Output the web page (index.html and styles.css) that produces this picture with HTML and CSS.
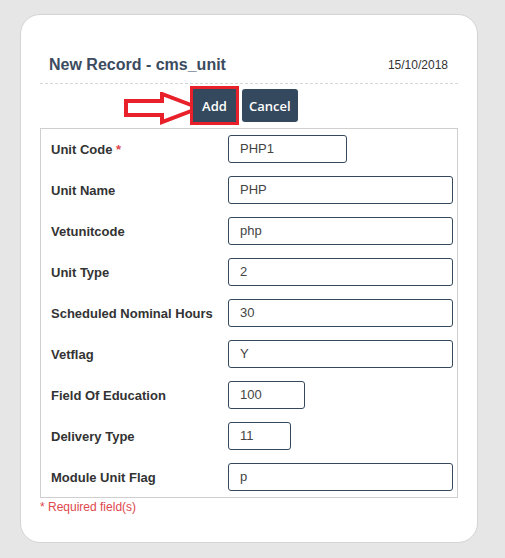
FILE: index.html
```html
<!DOCTYPE html>
<html>
<head>
<meta charset="utf-8">
<link rel="stylesheet" href="styles.css">
</head>
<body>
<div class="card">
  <div class="header">
    <span class="title">New Record - cms_unit</span>
    <span class="date">15/10/2018</span>
  </div>
  <div class="actions">
    <svg class="arrow" width="80" height="34" viewBox="0 0 80 34">
      <polygon points="3,9 39,9 39,2 76,16 39,30 39,23 3,23" fill="#fff" stroke="#e8202a" stroke-width="4" stroke-linejoin="miter"/>
    </svg>
    <button class="btn btn-add">Add</button>
    <button class="btn">Cancel</button>
  </div>
  <div class="form">
    <div class="row"><label>Unit Code <span class="req">*</span></label><div class="input w-code">PHP1</div></div>
    <div class="row"><label>Unit Name</label><div class="input w-full">PHP</div></div>
    <div class="row"><label>Vetunitcode</label><div class="input w-full">php</div></div>
    <div class="row"><label>Unit Type</label><div class="input w-full">2</div></div>
    <div class="row"><label>Scheduled Nominal Hours</label><div class="input w-full">30</div></div>
    <div class="row"><label>Vetflag</label><div class="input w-full">Y</div></div>
    <div class="row"><label>Field Of Education</label><div class="input w-foe">100</div></div>
    <div class="row"><label>Delivery Type</label><div class="input w-dt">11</div></div>
    <div class="row"><label>Module Unit Flag</label><div class="input w-full">p</div></div>
  </div>
  <div class="required">* Required field(s)</div>
</div>
</body>
</html>
```
FILE: styles.css
```css
html, body {
  margin: 0;
  padding: 0;
  background: #e6e6e6;
  font-family: "Liberation Sans", Arial, sans-serif;
}
body {
  padding: 14px 0 0 20px;
}
.card {
  width: 418px;
  height: 487px;
  background: #fff;
  border: 1px solid #d4d4d4;
  border-radius: 20px;
  padding: 40px 19px 0 19px;
}
.header {
  display: flex;
  justify-content: space-between;
  align-items: center;
  height: 20px;
  padding: 0 10px 8px 9px;
  border-bottom: 1px dashed #d6d6d6;
}
.title {
  font-size: 16px;
  font-weight: bold;
  color: #3b4c60;
}
.date {
  font-size: 12px;
  color: #333;
}
.actions {
  position: relative;
  display: flex;
  gap: 6px;
  padding: 5px 0 0 153px;
  height: 44px;
  box-sizing: border-box;
  align-items: flex-start;
}
.arrow {
  position: absolute;
  left: 83px;
  top: 8px;
}
.btn {
  height: 33px;
  border: none;
  border-radius: 3px;
  background: #34495e;
  color: #fff;
  font-family: "Open Sans", "Liberation Sans", Arial, sans-serif;
  font-size: 13px;
  font-weight: 600;
  padding: 0 7px;
  margin: 0;
}
.btn-add {
  width: 43px;
  padding: 0;
  border-radius: 0;
  outline: 3px solid #e8202a;
  outline-offset: 0;
  position: relative;
}
.form {
  border: 1px solid #cfcfcf;
  padding: 6px 4px 6px 10px;
  display: flex;
  flex-direction: column;
  gap: 13px;
}
.row {
  display: flex;
  align-items: center;
  height: 28px;
}
.row label {
  width: 177px;
  flex: none;
  font-size: 13px;
  font-weight: bold;
  color: #333;
}
.req {
  color: #e0474c;
}
.input {
  height: 28px;
  box-sizing: border-box;
  border: 1px solid #34495e;
  border-radius: 3px;
  padding: 0 11px;
  font-size: 13px;
  color: #444;
  line-height: 26px;
}
.w-full { width: 225px; }
.w-code { width: 119px; }
.w-foe { width: 77px; }
.w-dt { width: 63px; }
.required {
  font-size: 12px;
  color: #e0474c;
  margin-top: 2px;
}
```
